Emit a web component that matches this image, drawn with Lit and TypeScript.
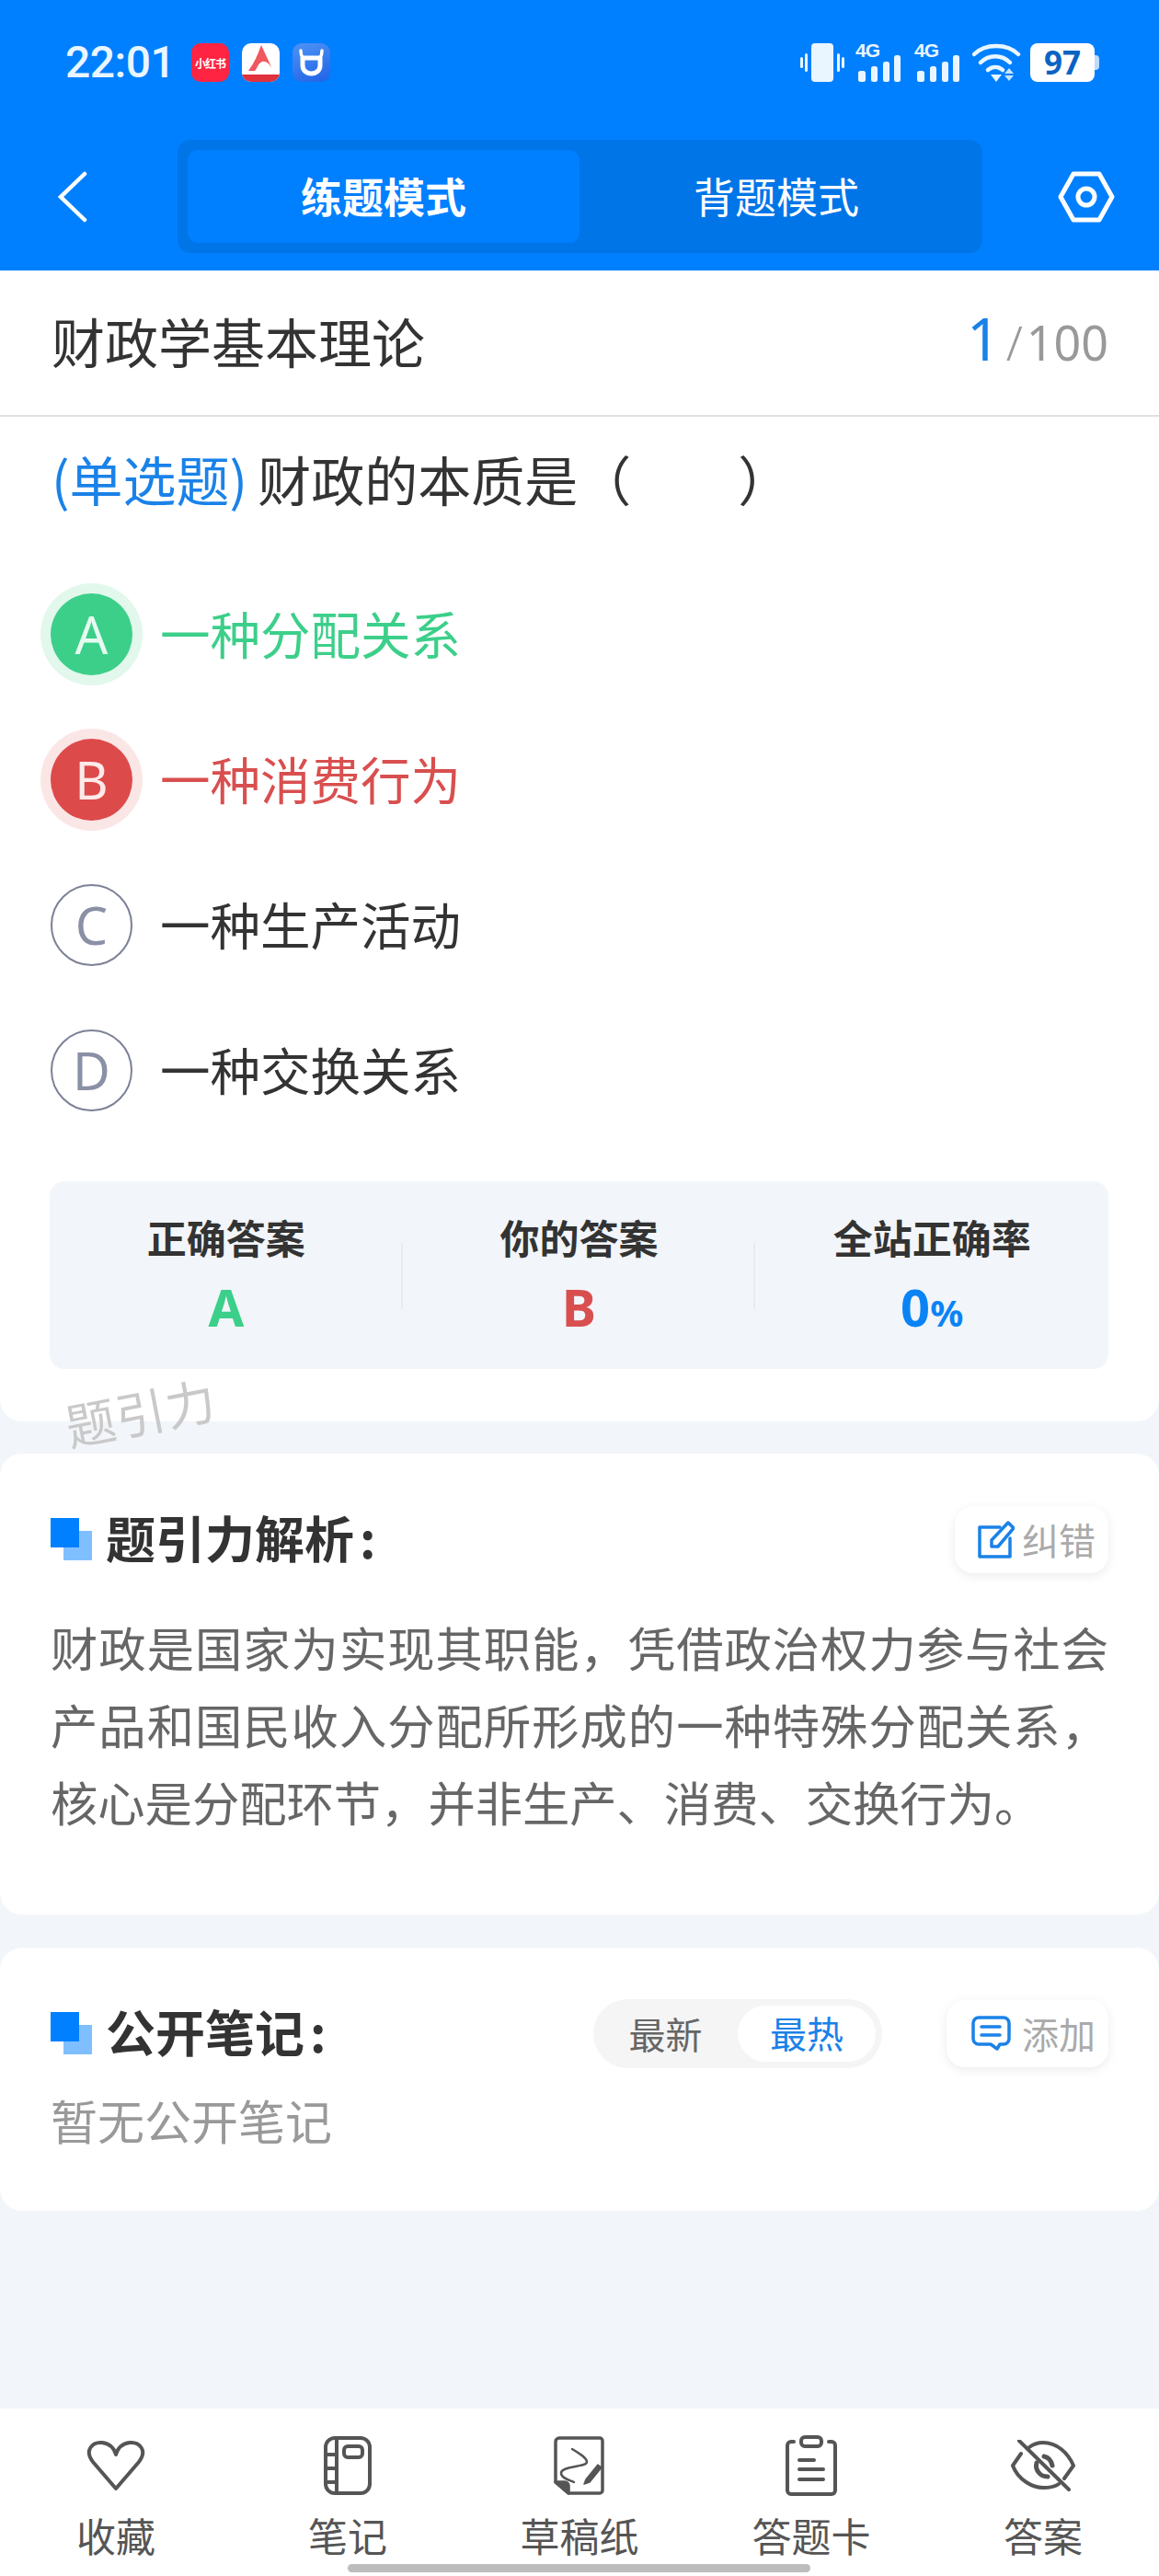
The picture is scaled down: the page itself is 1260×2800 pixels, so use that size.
import { LitElement, html, css, svg } from "lit";
import { customElement } from "lit/decorators.js";

const options = [
  { k: "A", t: "一种分配关系", s: "right" },
  { k: "B", t: "一种消费行为", s: "wrong" },
  { k: "C", t: "一种生产活动", s: "" },
  { k: "D", t: "一种交换关系", s: "" },
];

const bottomIcons = {
  heart: svg`<svg width="64" height="56" viewBox="0 0 64 56" fill="none" stroke="#555" stroke-width="4" stroke-linejoin="round"><path d="M32 53 L7 24 C-3 11 7 2 17 3 C25 4 30 9 32 16 C34 9 39 4 47 3 C57 2 67 11 57 24 Z"/></svg>`,
  note: svg`<svg width="52" height="64" viewBox="0 0 52 64" fill="none" stroke="#555" stroke-width="4"><rect x="2" y="2" width="48" height="60" rx="10"/><path d="M14 2V62M2 20H14M2 35H14M2 50H14"/><rect x="22" y="11" width="20" height="12" rx="4"/></svg>`,
  sketch: svg`<svg width="56" height="64" viewBox="0 0 56 64" fill="none" stroke="#555" stroke-width="3.5" stroke-linecap="round" stroke-linejoin="round"><path d="M6 2H50a3 3 0 0 1 3 3V59a3 3 0 0 1-3 3H16L2 50V6a4 4 0 0 1 4-4Z"/><path d="M2 50H12a4 4 0 0 1 4 4V62Z" fill="#555"/><path d="M20 14C30 20 36 24 36 28C36 34 8 32 8 40C8 46 18 48 22 50" stroke-width="2.5"/><path d="M35 47L48 31L52 34L39 50L33 52Z" fill="#555" stroke-width="1.5"/></svg>`,
  card: svg`<svg width="56" height="66" viewBox="0 0 56 66" fill="none" stroke="#555" stroke-width="4" stroke-linecap="round" stroke-linejoin="round"><path d="M9 7H6a4 4 0 0 0-4 4V60a4 4 0 0 0 4 4H50a4 4 0 0 0 4-4V11a4 4 0 0 0-4-4H47"/><rect x="17" y="2" width="22" height="10" rx="4"/><path d="M15 27H31M15 37H41M15 48H41"/></svg>`,
  eye: svg`<svg width="70" height="56" viewBox="0 0 70 56" fill="none" stroke="#555" stroke-width="4" stroke-linecap="round" stroke-linejoin="round"><path d="M11 15L2 28C8 44 24 52 35 52C42 52 48 51 52 48M20 8C24 5 29 3 35 3C50 3 62 14 68 28L58 42"/><path d="M28 25C26 32 31 40 40 40M36 18C41 19 44 23 45 28"  stroke-width="5"/><path d="M9 1L63 54"/></svg>`,
};

const bottom = [
  { i: bottomIcons.heart, t: "收藏" },
  { i: bottomIcons.note, t: "笔记" },
  { i: bottomIcons.sketch, t: "草稿纸" },
  { i: bottomIcons.card, t: "答题卡" },
  { i: bottomIcons.eye, t: "答案" },
];

const signal = svg`<svg width="50" height="42" viewBox="0 0 50 42" fill="#eaf6ff"><rect x="3" y="30" width="8" height="12" rx="2.5"/><rect x="17" y="25" width="7" height="17" rx="2.5"/><rect x="30" y="20" width="7" height="22" rx="2.5"/><rect x="42" y="13" width="7" height="29" rx="2.5"/></svg>`;

@customElement("app-root")
export class AppRoot extends LitElement {
  static styles = css`
    :host {
      display: flex;
      flex-direction: column;
      position: relative;
      width: 1260px;
      height: 2800px;
      overflow: hidden;
      background: #f2f5f9;
      font-family: "Noto Sans CJK SC", "Noto Sans", sans-serif;
      color: #333;
    }
    .header { background: #0080ff; height: 294px; flex: none; }
    .status {
      display: flex; align-items: center; height: 150px; box-sizing: border-box;
      padding: 47px 70px 61px 71px; color: #eaf6ff;
    }
    .time { font: 500 48px/42px Roboto, sans-serif; width: 137px; letter-spacing: -0.5px; }
    .app {
      width: 41px; height: 42px; border-radius: 10px; margin-right: 14px;
      display: flex; align-items: center; justify-content: center; overflow: hidden; flex: none;
    }
    .app.xhs { background: #ff2442; color: #fff; font-size: 12px; letter-spacing: -1px; font-weight: 700; white-space: nowrap; }
    .spacer { flex: 1; }
    .status-right { display: flex; align-items: center; }
    .g4 { position: relative; width: 50px; height: 42px; }
    .g4 span {
      position: absolute; left: 0; top: -4px; font: 700 21px/24px "Liberation Sans", sans-serif;
      color: #eaf6ff; letter-spacing: -1px;
    }
    .batt {
      width: 70px; height: 42px; background: #fff; border-radius: 8px; color: #0a63c4;
      font: 700 35px/42px "Noto Sans", sans-serif; text-align: center; position: relative;
    }
    .batt::after {
      content: ""; position: absolute; right: -5px; top: 13px; width: 5px; height: 16px;
      background: #bcdcfb; border-radius: 0 4px 4px 0;
    }
    .nav { display: flex; align-items: center; margin-top: 2px; height: 123px; }
    .back { width: 193px; flex: none; display: flex; padding-left: 62px; box-sizing: border-box; }
    .seg {
      width: 875px; height: 123px; box-sizing: border-box; background: #0075e8;
      border-radius: 14px; padding: 11px 10px 11px 11px; display: flex; flex: none;
    }
    .seg div {
      flex: 1; display: flex; align-items: center; justify-content: center;
      color: #fff; font-size: 45px; border-radius: 12px; padding-bottom: 3px; box-sizing: border-box;
    }
    .seg .on { background: #0080ff; font-weight: 700; flex: none; width: 426px; }
    .gear { flex: 1; display: flex; justify-content: flex-end; padding-right: 48px; }

    .card { background: #fff; border-radius: 24px; flex: none; }
    .main { border-radius: 0 0 24px 24px; height: 1251px; box-sizing: border-box; }
    .title-row {
      height: 159px; box-sizing: border-box; border-bottom: 2px solid #e0e0e0;
      display: flex; align-items: center; justify-content: space-between; padding: 0 55px 5px 56px;
    }
    .title { font-size: 58px; line-height: 80px; }
    .count { color: #999; font: 400 52px/80px "Noto Sans", sans-serif; }
    .count b { color: #1a82e8; font-weight: 400; font-size: 64px; }
    .count i { font-style: normal; font-weight: 300; margin: 0 4px 0 6px; }
    .q {
      font-size: 58px; line-height: 78px; padding: 28px 0 0 56px; height: 129px; box-sizing: content-box;
      white-space: pre;
    }
    .q span { color: #1a82e8; margin-right: -2px; }
    .opt { height: 158px; display: flex; align-items: center; padding-left: 55px; font-size: 54.5px; }
    .opt-t { margin-bottom: 3px; }
    .circle {
      width: 89px; height: 89px; border-radius: 50%; box-sizing: border-box;
      border: 2px solid #7c8196; color: #8a90a5; margin-right: 30px;
      display: flex; align-items: center; justify-content: center;
      font: 400 56px/1 "Noto Sans", sans-serif; flex: none;
    }
    .right { color: #3ccf8a; }
    .wrong { color: #d94f4f; }
    .right .circle { background: #3ccf8a; border: 0; color: #e6fbf0; box-shadow: 0 0 0 11px #e2f8ec; }
    .wrong .circle { background: #dd4a4a; border: 0; color: #fdeaea; box-shadow: 0 0 0 11px #fbe6e6; }
    .answer {
      margin: 42px 55px 0 54px; height: 204px; background: #f2f5f9; border-radius: 16px;
      display: grid; grid-template-columns: 1fr 1fr 1fr; align-items: center;
    }
    .cell { text-align: center; position: relative; height: 204px; box-sizing: border-box; padding-top: 30px; }
    .cell + .cell::before {
      content: ""; position: absolute; left: -2px; top: 67px; height: 72px; width: 2px; background: #e8ebef;
    }
    .cell .lb { font-size: 43px; font-weight: 700; line-height: 60px; }
    .cell .v { font: 700 56px/76px "Noto Sans", sans-serif; margin-top: 8px; }
    .cell .v small { font-size: 40px; }
    .blue { color: #0a84f5; }

    .mark {
      position: absolute; left: 70px; top: 1496px; font-size: 54px; line-height: 76px; color: #c9c9c9;
      transform: rotate(-11deg); transform-origin: center; letter-spacing: 1px;
    }

    .sec { margin-top: 35px; padding: 56px 55px 0; box-sizing: border-box; }
    .sec.one { height: 501px; }
    .sec.two { height: 286px; margin-top: 36px; }
    .row { display: flex; align-items: center; height: 74px; }
    .sq { width: 45px; height: 46px; position: relative; flex: none; margin-right: 15px; }
    .sq::before { content: ""; position: absolute; right: 0; bottom: 0; width: 31px; height: 32px; background: #80bfff; }
    .sq::after { content: ""; position: absolute; left: 0; top: 0; width: 31px; height: 32px; background: #0080ff; }
    .h { font-size: 54px; font-weight: 700; line-height: 74px; white-space: nowrap; margin-bottom: 5px; }
    .h i { font-style: normal; margin-left: 6px; }
    .btn {
      margin-left: auto; height: 73px; border-radius: 20px; background: #fff;
      box-shadow: 0 3px 12px rgba(0, 0, 0, 0.08); display: flex; align-items: center;
      color: #aaa; font-size: 40px; box-sizing: border-box; white-space: nowrap; flex: none;
    }
    .btn.a { width: 167px; padding-left: 25px; }
    .btn.a svg { margin-right: 8px; }
    .btn.b { width: 176px; padding-left: 27px; margin-left: 70px; }
    .btn.b svg { margin-right: 12px; }
    .body { font-size: 51.3px; line-height: 84px; color: #666; margin-top: 38px; width: 1150px; text-align: justify; }
    .pill {
      margin-left: auto; width: 314px; height: 75px; background: #f5f5f5; border-radius: 38px;
      display: flex; align-items: center; box-sizing: border-box; font-size: 40px; color: #666; flex: none;
      line-height: 58px;
    }
    .pill span { width: 157px; text-align: center; flex: none; }
    .pill .on {
      width: 150px; height: 61px; line-height: 58px; background: #fff; color: #1a82e8; border-radius: 31px;
    }
    .empty { font-size: 51px; line-height: 60px; color: #999; margin-top: 27px; }

    .bottom {
      margin-top: auto; height: 182px; background: #fff; display: grid;
      grid-template-columns: repeat(5, 252px); flex: none;
    }
    .tab { display: flex; flex-direction: column; align-items: center; padding-top: 29px; color: #555; }
    .tab .ic { height: 66px; display: flex; align-items: center; }
    .tab .t { font-size: 43px; line-height: 52px; margin-top: 16px; }
    .home {
      position: absolute; left: 378px; top: 2787px; width: 503px; height: 9px;
      background: #bdbdbd; border-radius: 5px;
    }
  `;

  render() {
    return html`
      <div class="header">
        <div class="status">
          <div class="time">22:01</div>
          <div class="app xhs">小红书</div>
          <div class="app">
            <svg width="41" height="42" viewBox="0 0 41 42">
              <rect width="41" height="42" fill="#fff" />
              <path d="M0 34H41V42H0Z" fill="#e0323a" />
              <path d="M21 2L33 28C30 22 26 19 22 20C17 22 17 27 14 30L7 30C13 22 17 13 21 2Z" fill="#f0585e" />
            </svg>
          </div>
          <div class="app" style="background:linear-gradient(160deg,#4f93f5,#1f63e6)">
            <svg width="41" height="42" viewBox="0 0 41 42" fill="none" stroke="#fff" stroke-linecap="round">
              <path d="M11 16V24C11 36 30 36 30 24V16Z" stroke-width="5" stroke-linejoin="round" />
              <path d="M11 16C9 13 9 10 9 8M30 16C32 13 32 10 32 8" stroke-width="3.5" />
            </svg>
          </div>
          <div class="spacer"></div>
          <div class="status-right">
            <svg width="48" height="42" viewBox="0 0 48 42" fill="#eaf6ff" style="margin-right:12px">
              <rect x="12" y="0" width="24" height="42" rx="4" />
              <rect x="0" y="15" width="3" height="12" rx="1.5" />
              <rect x="5" y="11" width="3" height="20" rx="1.5" />
              <rect x="40" y="11" width="3" height="20" rx="1.5" />
              <rect x="45" y="15" width="3" height="12" rx="1.5" />
            </svg>
            <div class="g4" style="margin-right:14px"><span>4G</span>${signal}</div>
            <div class="g4" style="margin-right:13px"><span>4G</span>${signal}</div>
            <svg width="54" height="42" viewBox="0 0 54 42" fill="none" stroke="#eaf6ff" stroke-width="4.5" stroke-linecap="round" style="margin-right:9px">
              <path d="M2 12C14 0 38 0 50 12" />
              <path d="M9 21C18 12 32 12 41 21" />
              <path d="M17 29C22 25 28 25 33 29" />
              <path d="M20 34H32L26 42Z" fill="#eaf6ff" stroke="none" />
              <path d="M40 27L45 33H35ZM35 35H45L40 41Z" fill="#eaf6ff" stroke="none" opacity=".85" />
            </svg>
            <div class="batt">97</div>
          </div>
        </div>
        <div class="nav">
          <div class="back">
            <svg width="34" height="56" viewBox="0 0 34 56" fill="none" stroke="#fff" stroke-width="4.5" stroke-linecap="round">
              <path d="M30 3L4 28L30 53" />
            </svg>
          </div>
          <div class="seg">
            <div class="on">练题模式</div>
            <div>背题模式</div>
          </div>
          <div class="gear">
            <svg width="62" height="56" viewBox="0 0 62 56" fill="none" stroke="#fff" stroke-width="5" stroke-linejoin="round">
              <path d="M3 28L17 3H45L59 28L45 53H17Z" />
              <circle cx="31" cy="28" r="9" />
            </svg>
          </div>
        </div>
      </div>

      <div class="card main">
        <div class="title-row">
          <div class="title">财政学基本理论</div>
          <div class="count"><b>1</b><i>/</i>100</div>
        </div>
        <div class="q"><span>(单选题)</span> 财政的本质是（　　）</div>
        ${options.map(
          (o) => html`<div class="opt ${o.s}"><div class="circle">${o.k}</div><div class="opt-t">${o.t}</div></div>`
        )}
        <div class="answer">
          <div class="cell"><div class="lb">正确答案</div><div class="v right">A</div></div>
          <div class="cell"><div class="lb">你的答案</div><div class="v wrong">B</div></div>
          <div class="cell"><div class="lb">全站正确率</div><div class="v blue">0<small>%</small></div></div>
        </div>
      </div>
      <div class="mark">题引力</div>

      <div class="card sec one">
        <div class="row">
          <div class="sq"></div>
          <div class="h">题引力解析<i>:</i></div>
          <div class="btn a">
            <svg width="40" height="42" viewBox="0 0 40 42" fill="none" stroke="#1a82e8" stroke-width="3.5" stroke-linejoin="round" stroke-linecap="round">
              <path d="M24 8H2V40H35V20" />
              <path d="M15 29V22L33 3L39 9L22 29Z" />
            </svg>
            纠错
          </div>
        </div>
        <div class="body">财政是国家为实现其职能，凭借政治权力参与社会产品和国民收入分配所形成的一种特殊分配关系，核心是分配环节，并非生产、消费、交换行为。</div>
      </div>

      <div class="card sec two">
        <div class="row">
          <div class="sq"></div>
          <div class="h">公开笔记<i>:</i></div>
          <div class="pill"><span>最新</span><span class="on">最热</span></div>
          <div class="btn b">
            <svg width="43" height="38" viewBox="0 0 43 38" fill="none" stroke="#1a82e8" stroke-width="3.5" stroke-linecap="round" stroke-linejoin="round">
              <path d="M8 2H35a6 6 0 0 1 6 6V25a6 6 0 0 1-6 6H31L28 36L21 31H8a6 6 0 0 1-6-6V8a6 6 0 0 1 6-6Z" />
              <path d="M11 12H31M11 21H31" />
            </svg>
            添加
          </div>
        </div>
        <div class="empty">暂无公开笔记</div>
      </div>

      <div class="bottom">
        ${bottom.map(
          (b) => html`<div class="tab"><div class="ic">${b.i}</div><div class="t">${b.t}</div></div>`
        )}
      </div>
      <div class="home"></div>
    `;
  }
}
